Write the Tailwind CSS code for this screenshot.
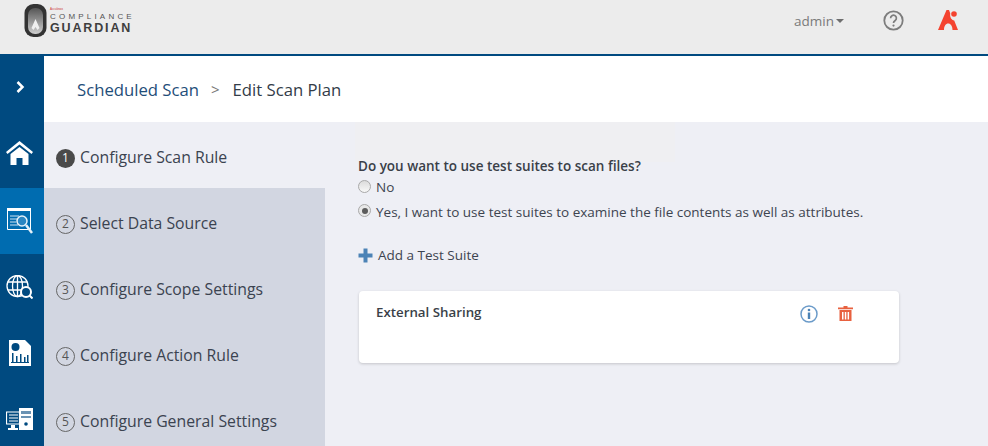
<!DOCTYPE html>
<html><head><meta charset="utf-8"><script src="https://cdn.jsdelivr.net/npm/@tailwindcss/browser@4"></script></head>
<body class="m-0 overflow-hidden">
<div class="w-[988px] h-[446px] overflow-hidden flex flex-col bg-[#eeeff5] font-['Open_Sans',sans-serif] text-[#3d4450]">
  <header class="h-[56px] shrink-0 bg-[#ececec] border-b-2 border-[#004a80] flex items-start -mb-[1px] relative z-10">
    <div class="ml-[24px] mt-[3px] flex items-start">
      <svg width="23" height="34" viewBox="0 0 23 34"><defs><linearGradient id="lk" x1="0" y1="0" x2="0" y2="1"><stop offset="0" stop-color="#555"/><stop offset="0.55" stop-color="#999"/><stop offset="1" stop-color="#cfcfcf"/></linearGradient></defs><rect x="0.500" y="1" width="22" height="33" rx="9" fill="#333"/><rect x="4" y="5" width="15" height="26" rx="7" fill="url(#lk)"/><path d="M11.500 16l-4 9 2 2 2-3 2 3 2-2z" fill="#f0f0f0"/></svg>
      <div class="ml-[3px] flex flex-col font-['Liberation_Sans',sans-serif]">
        <span class="text-[3px] leading-[4px] text-[#c33] pt-[4px] h-[9px]">Accuknox</span>
        <span class="text-[8px] leading-[9px] h-[9px] tracking-[3.2px] text-[#555]">COMPLIANCE</span>
        <span class="text-[12.5px] leading-[15px] font-bold tracking-[1.85px] text-[#3e3e3e]">GUARDIAN</span>
      </div>
    </div>
    <div class="ml-auto flex items-start">
      <div class="mt-[12px] flex items-center text-[13.5px] leading-[18px] text-[#7a7a7a]">admin<span class="ml-[2px] w-0 h-0 border-x-[4px] border-x-transparent border-t-[4px] border-t-[#6e6e6e]"></span></div>
      <svg class="ml-[39px] mt-[10px]" width="21" height="21" viewBox="0 0 21 21"><circle cx="10.500" cy="10.500" r="9.200" fill="none" stroke="#7d7d7d" stroke-width="1.800"/><path d="M7.600 8.200a2.900 2.900 0 1 1 4.600 2.300c-1.100.8-1.700 1.300-1.700 2.600" fill="none" stroke="#7d7d7d" stroke-width="1.700"/><circle cx="10.500" cy="15.600" r="1.100" fill="#7d7d7d"/></svg>
      <svg class="ml-[34px] mr-[30px] mt-[10px]" width="20" height="20" viewBox="0 0 20 20"><path d="M8.500 0 0 20h6c0-4 1.800-6.500 4.200-6.500S14.500 16 14.500 20H20l-3.800-9.500C13.500 10 11.500 7 12.300 3.500L11 0z" fill="#f4432f"/><circle cx="16" cy="4" r="2.800" fill="#f4432f"/></svg>
    </div>
  </header>
  <div class="flex flex-1 min-h-0">
    <nav class="w-[44px] shrink-0 bg-[#004a80] flex flex-col">
      <div class="h-[67px] shrink-0 flex items-center justify-center pr-[4px] pb-[4px]"><svg width="9" height="12" viewBox="0 0 9 12"><path d="M1.500 1l5 5-5 5" fill="none" stroke="#fff" stroke-width="2.500"/></svg></div>
      <div class="h-[66px] shrink-0 flex items-center justify-center pr-[5px] pb-[4px]"><svg width="27" height="24" viewBox="0 0 27 24"><path d="M13.500 0 0 11l1.500 2L13.500 3.500 25.500 13l1.500-2z" fill="#fff"/><path d="M4.500 13 13.500 6l9 7v11h-6v-7h-6v7h-6z" fill="#fff"/></svg></div>
      <div class="h-[66px] shrink-0 bg-[#006cb0] flex items-center justify-center pr-[5px]"><svg width="26" height="27" viewBox="0 0 26 27"><path d="M.5.500h23v21H.5z" fill="none" stroke="#fff" stroke-width="1"/><path d="M0 0h24v3H0z" fill="#fff"/><path d="M3 8h9M3 11h7M3 14h6M3 17h8" stroke="#cfe3f2" stroke-width="1"/><circle cx="15" cy="13" r="5" fill="#2a86c2" stroke="#e5f1f9" stroke-width="1.500"/><path d="M19 17l6 8" stroke="#e5f1f9" stroke-width="2.500"/></svg></div>
      <div class="h-[66px] shrink-0 flex items-center justify-center pr-[5px]"><svg width="27" height="24" viewBox="0 0 27 24"><g fill="none" stroke="#fff" stroke-width="1.300"><circle cx="11.500" cy="11" r="10.500"/><ellipse cx="11.500" cy="11" rx="5" ry="10.500"/><path d="M11.500 .5v21M2 7h19M2 15h19"/></g><circle cx="20" cy="17" r="5" fill="#004a80" stroke="#fff" stroke-width="2"/><path d="M23.500 20.500l3 3" stroke="#fff" stroke-width="2"/></svg></div>
      <div class="h-[66px] shrink-0 flex items-center justify-center pr-[5px]"><svg width="22" height="26" viewBox="0 0 22 26"><path d="M0 0h16l6 6v20H0z" fill="#fff"/><circle cx="6.500" cy="7" r="4" fill="#004a80"/><path d="M3 13h1.500v9H3zM7 16h1.500v6H7zM11 14h1.500v8H11zM15 17h1.500v5H15zM18 15h1.500v7H18zM2 22h18v1H2z" fill="#004a80"/></svg></div>
      <div class="h-[66px] shrink-0 flex items-center justify-center pr-[5px]"><svg width="27" height="23" viewBox="0 0 27 23"><path d="M.5 4h13v12H.5z" fill="none" stroke="#fff" stroke-width="1.200"/><path d="M3 7h9M3 10h9M3 13h9" stroke="#fff"/><path d="M5 17h4v3h3v2H2v-2h3z" fill="#fff"/><path d="M13 0h14v22H13z" fill="#fff"/><path d="M15 3h10v3H15zM15 8h10v2H15z" fill="#6b93b3"/><circle cx="20" cy="16" r="1.800" fill="#004a80"/></svg></div>
    </nav>
    <div class="flex-1 min-w-0 flex flex-col">
      <div class="h-[67px] shrink-0 bg-white flex items-center pl-[33px] pt-[2px] text-[16.7px]">
        <span class="text-[#1f4e79]">Scheduled Scan</span><span class="ml-[12px] mr-[13px] text-[#777] text-[15px]">&gt;</span><span class="text-[#333c48]">Edit Scan Plan</span>
      </div>
      <div class="flex flex-1 min-h-0">
        <ol class="w-[281px] shrink-0 flex flex-col bg-[#d2d6e1] text-[15.8px] text-[#3b4350]">
          <li class="h-[66px] shrink-0 bg-[#eeeff5] flex items-center pl-[12px] pt-[6px] gap-[5px]"><span class="w-[19px] h-[19px] rounded-full bg-[#4a4a4a] text-white text-[12px] flex items-center justify-center">1</span>Configure Scan Rule</li>
          <li class="h-[66px] shrink-0 flex items-center pl-[12px] pt-[6px] gap-[5px]"><span class="w-[19px] h-[19px] rounded-full border border-[#666] text-[#555] text-[12px] flex items-center justify-center">2</span>Select Data Source</li>
          <li class="h-[66px] shrink-0 flex items-center pl-[12px] pt-[6px] gap-[5px]"><span class="w-[19px] h-[19px] rounded-full border border-[#666] text-[#555] text-[12px] flex items-center justify-center">3</span>Configure Scope Settings</li>
          <li class="h-[66px] shrink-0 flex items-center pl-[12px] pt-[6px] gap-[5px]"><span class="w-[19px] h-[19px] rounded-full border border-[#666] text-[#555] text-[12px] flex items-center justify-center">4</span>Configure Action Rule</li>
          <li class="h-[66px] shrink-0 flex items-center pl-[12px] pt-[6px] gap-[5px]"><span class="w-[19px] h-[19px] rounded-full border border-[#666] text-[#555] text-[12px] flex items-center justify-center">5</span>Configure General Settings</li>
        </ol>
        <main class="flex-1 min-w-0 pl-[33px] pt-[34px] text-[13.5px] relative">
          <div class="absolute left-[30px] top-0 w-[320px] h-[40px] bg-[#efeff2]"></div>
          <p class="relative font-semibold leading-[20px] text-[#3a3f48]">Do you want to use test suites to scan files?</p>
          <label class="mt-[1px] h-[20px] flex items-center gap-[5px]"><span class="w-[13px] h-[13px] rounded-full border border-[#a9a9a9] bg-gradient-to-b from-[#dcdcdc] to-[#f8f8f8] mb-[1px]"></span>No</label>
          <label class="mt-[5px] h-[20px] flex items-center gap-[5px]"><span class="w-[13px] h-[13px] rounded-full border border-[#a9a9a9] bg-[#e8e8e8] flex items-center justify-center mb-[3px]"><span class="w-[6px] h-[6px] rounded-full bg-[#5c5c5c]"></span></span>Yes, I want to use test suites to examine the file contents as well as attributes.</label>
          <div class="mt-[23px] h-[20px] flex items-center gap-[5px]"><svg width="15" height="15" viewBox="0 0 15 15"><path d="M5.500 0.500h4v5h5v4h-5v5h-4v-5h-5v-4h5z" fill="#4c83b6"/></svg>Add a Test Suite</div>
          <div class="mt-[26px] ml-[1px] w-[540px] h-[72px] bg-white rounded-[4px] shadow-[0_1px_3px_rgba(0,0,0,0.18)] relative pl-[17px] pt-[12px]">
            <span class="font-semibold text-[13.3px] leading-[18px] text-[#3a3f48] block">External Sharing</span>
            <svg class="absolute left-[441px] top-[14px]" width="18" height="18" viewBox="0 0 18 18"><circle cx="9" cy="9" r="8" fill="none" stroke="#6b9bc9" stroke-width="1.500"/><path d="M7.800 7.500h2.400v6.500H7.800z" fill="#4c83b6"/><circle cx="9" cy="5" r="1.300" fill="#4c83b6"/></svg>
            <svg class="absolute left-[479px] top-[15px]" width="15" height="15" viewBox="0 0 15 15"><path d="M0 1.500h5.500V0h4v1.500H15v1.700H0z" fill="#e8613f"/><path fill-rule="evenodd" d="M1.500 4h12v11h-12zM4 6v7.500h1.500V6zM6.800 6v7.500h1.500V6zM9.600 6v7.500h1.500V6z" fill="#e8613f"/></svg>
          </div>
        </main>
      </div>
    </div>
  </div>
</div>
</body></html>
